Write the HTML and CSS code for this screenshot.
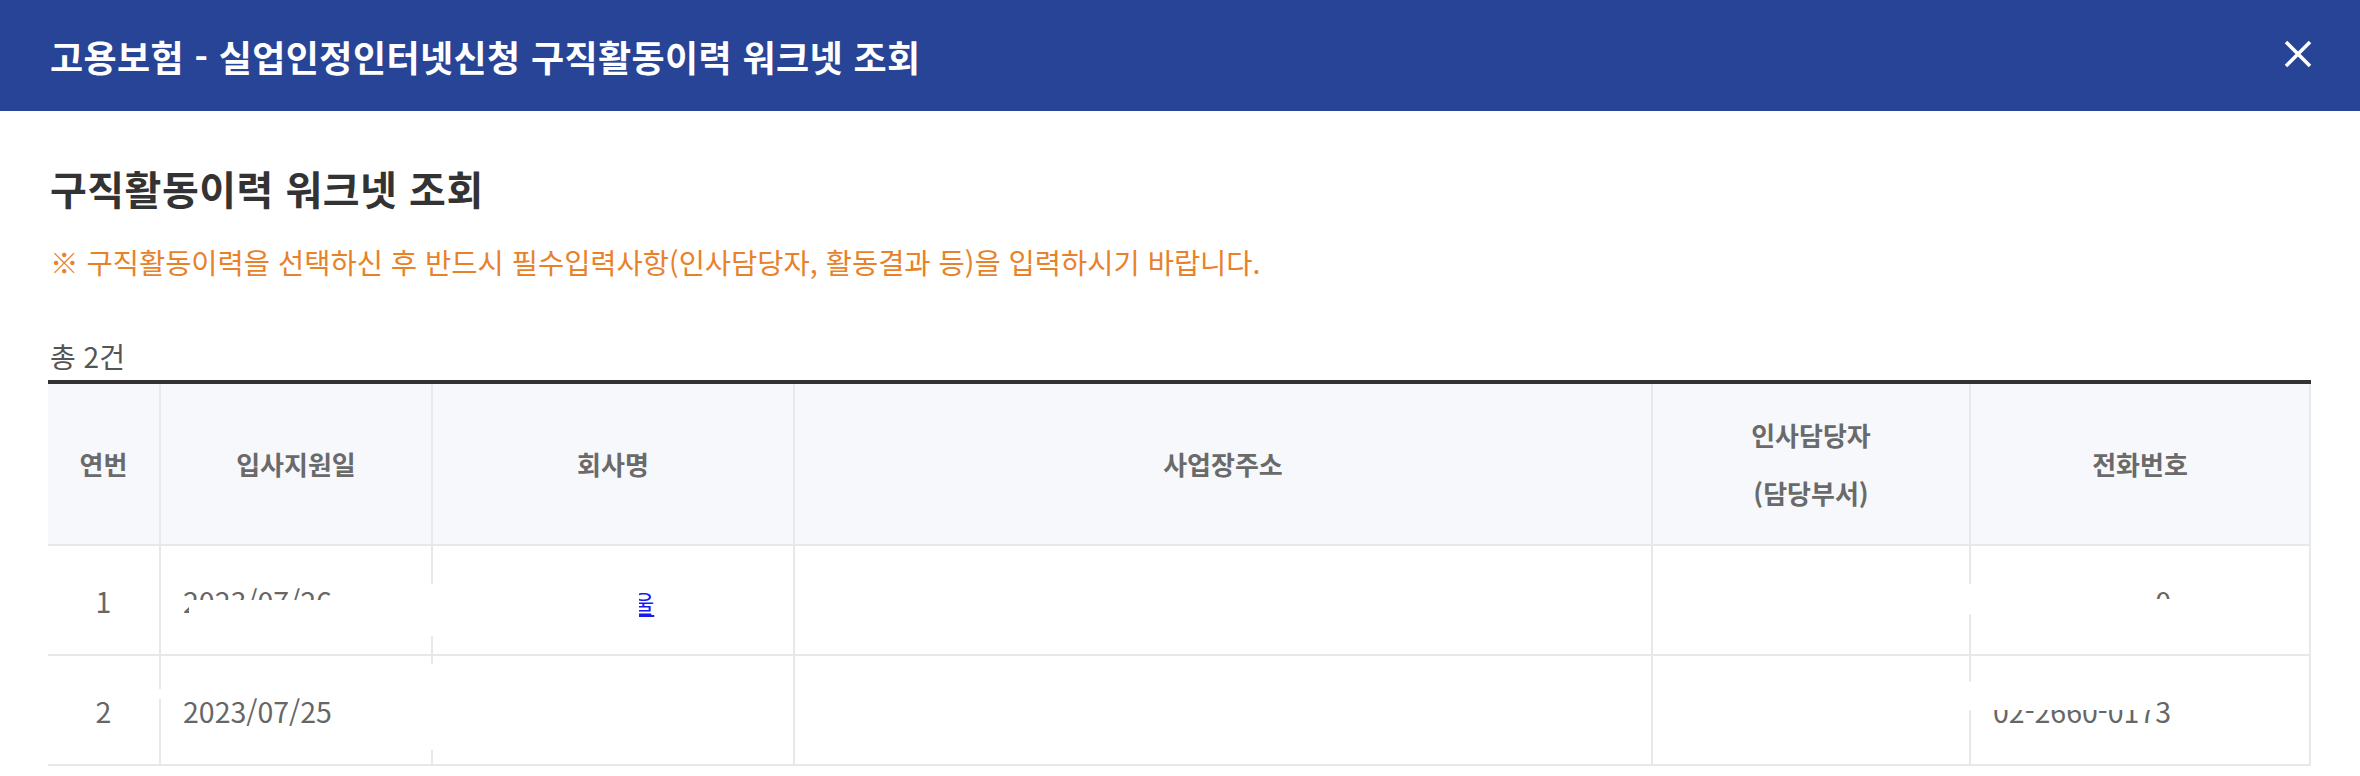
FILE: index.html
```html
<!DOCTYPE html>
<html lang="ko">
<head>
<meta charset="utf-8">
<title>구직활동이력 워크넷 조회</title>
<link rel="stylesheet" href="styles.css">
</head>
<body>
<div class="modal">
  <header class="modal-head">
    <h1 class="modal-title">고용보험 - 실업인정인터넷신청 구직활동이력 워크넷 조회</h1>
    <button class="close-btn" type="button" aria-label="닫기">
      <svg width="28" height="28" viewBox="0 0 28 28"><path d="M2 2 L26 26 M26 2 L2 26" stroke="#fff" stroke-width="3.6" stroke-linecap="butt" fill="none"/></svg>
    </button>
  </header>
  <main class="modal-body">
    <h2 class="page-title">구직활동이력 워크넷 조회</h2>
    <p class="notice">※ 구직활동이력을 선택하신 후 반드시 필수입력사항(인사담당자, 활동결과 등)을 입력하시기 바랍니다.</p>
    <p class="count">총 2건</p>
    <table class="grid">
      <colgroup>
        <col class="w1"><col class="w2"><col class="w3"><col class="w4"><col class="w5"><col class="w6">
      </colgroup>
      <thead>
        <tr>
          <th class="first">연번</th>
          <th>입사지원일</th>
          <th>회사명</th>
          <th>사업장주소</th>
          <th>인사담당자<br>(담당부서)</th>
          <th class="last">전화번호</th>
        </tr>
      </thead>
      <tbody>
        <tr>
          <td class="first center">1</td>
          <td class="cell">2023/07/26<span class="mask m-date1"></span></td>
          <td class="cell center"><a class="co-link" href="#">(주)한울</a><span class="mask m-co1"></span></td>
          <td></td>
          <td></td>
          <td class="cell last">02-2660-0100<span class="mask m-ph1a"></span><span class="mask m-ph1b"></span></td>
        </tr>
        <tr>
          <td class="first center">2</td>
          <td class="cell">2023/07/25<span class="mask m-date2"></span></td>
          <td class="cell center"><span class="mask m-co2"></span></td>
          <td></td>
          <td></td>
          <td class="cell last">02-2660-0173<span class="mask m-ph2"></span></td>
        </tr>
      </tbody>
    </table>
  </main>
</div>
</body>
</html>
```
FILE: styles.css
```css
* { box-sizing: border-box; }
html, body { margin: 0; padding: 0; background: #fff; }
body {
  font-family: "Noto Sans CJK KR", "Noto Sans", sans-serif;
  color: #333;
}
.modal { width: 2360px; }
.modal-head {
  height: 111px;
  background: #284496;
  display: flex;
  align-items: center;
  justify-content: space-between;
  padding: 0 48px 0 50px;
}
.modal-title {
  margin: 0;
  color: #fff;
  font-size: 36px;
  font-weight: 700;
  letter-spacing: 0.4px;
  line-height: 1;
}
.close-btn {
  width: 28px;
  height: 28px;
  padding: 0;
  border: 0;
  background: transparent;
  display: block;
  margin-top: -4px;
}
.close-btn svg { display: block; }
.modal-body {
  padding: 47px 50px 0 48px;
}
.page-title {
  margin: 0 0 0 2px;
  font-size: 40px;
  line-height: 60px;
  font-weight: 700;
  letter-spacing: 0.5px;
  color: #333;
}
.notice {
  margin: 24px 0 0 2px;
  font-size: 28.5px;
  line-height: 40px;
  color: #e8822a;
}
.count {
  margin: 56px 0 0 2px;
  font-size: 28px;
  line-height: 36px;
  color: #555;
}
.grid {
  margin-top: 6px;
  width: 2262px;
  border-collapse: collapse;
  table-layout: fixed;
  border-top: 4px solid #333;
}
.w1 { width: 112px; }
.w2 { width: 272px; }
.w3 { width: 362px; }
.w4 { width: 858px; }
.w5 { width: 318px; }
.w6 { width: 340px; }
.grid th {
  height: 163px;
  background: #f7f8fc;
  font-size: 26px;
  font-weight: 700;
  line-height: 58px;
  color: #6a6a6a;
  border: 2px solid #e7e8ec;
  border-top: 0;
  padding: 0;
}
.grid td {
  height: 110px;
  font-size: 28.5px;
  color: #666;
  border: 2px solid #e7e8ec;
  padding: 0 22px;
  white-space: nowrap;
}
.grid .first { border-left: 0; }
.grid .center { text-align: center; padding: 0; }
.cell { position: relative; }
.co-link { color: #1a1aee; text-decoration: underline; font-size: 24px; }
.mask {
  position: absolute;
  background: #fff;
}
.m-date1 { left: 28px; top: 54px; width: 170px; height: 18px; }
.m-date2 { left: -4px; top: 33px; width: 8px; height: 10px; }
.m-co1 { left: -4px; top: 38px; width: 210px; height: 52px; }
.m-co2 { left: -4px; top: 8px; width: 8px; height: 86px; }
.m-ph1a { left: -4px; top: 38px; width: 189px; height: 30px; }
.m-ph1b { left: 185px; top: 53px; width: 40px; height: 15px; }
.m-ph2 { left: -4px; top: 26px; width: 190px; height: 28px; }
```
